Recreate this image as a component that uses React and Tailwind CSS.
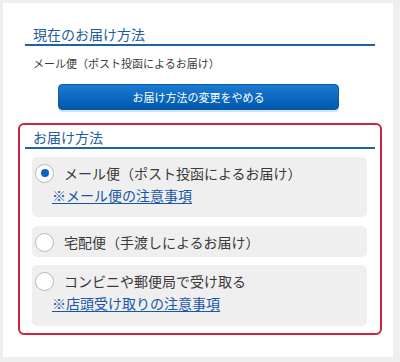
export default function App() {
  const font = { fontFamily: '"Noto Sans CJK JP", "Noto Sans", sans-serif' };
  return (
    <div
      className="w-[400px] h-[362px] bg-[#efefef] pt-[3px] pl-[3px] pr-[7px] pb-[5px]"
      style={font}
    >
      <div className="h-full bg-white pt-[21px] pl-[22px] pr-[18px] pb-[22px] flex flex-col">
        <div className="border-b-2 border-[#1d63a6] pl-[8px] text-[14px] leading-[20px] text-[#1f5d9c]">
          現在のお届け方法
        </div>
        <div className="mt-[8px] pl-[8px] text-[11px] leading-[18px] text-[#3a3a3a]">
          メール便（ポスト投函によるお届け）
        </div>
        <button className="mt-[12px] ml-[33px] w-[281px] h-[26px] rounded-[4px] bg-gradient-to-b from-[#1a7bd2] to-[#0058ad] border border-[#0b5aa6] text-white text-[11px] leading-[24px] shadow-[0_2px_0_#cfe7f8]">
          お届け方法の変更をやめる
        </button>
        <div className="mt-[13px] -mx-[7px] border-2 border-[#cc2340] rounded-[6px] pt-[2px] pb-[7px] px-[5px]">
          <div className="border-b-2 border-[#1d63a6] pl-[8px] text-[14px] leading-[20px] text-[#1f5d9c]">
            お届け方法
          </div>
          <div className="mt-[8px] pl-[7px] pr-[8px] flex flex-col gap-[9px]">
            <div className="bg-[#efefef] rounded-[5px] pt-[5px] pb-[11px] pl-[3px]">
              <div className="flex items-center h-[22px]">
                <span className="w-[19px] h-[19px] rounded-full border-[1.5px] border-[#b9b9b9] bg-white flex items-center justify-center">
                  <span className="w-[8px] h-[8px] rounded-full bg-[#0b63c2]" />
                </span>
                <span className="ml-[10px] text-[14px] leading-[22px] text-[#3a3a3a]">
                  メール便（ポスト投函によるお届け）
                </span>
              </div>
              <div className="pl-[17px] text-[14px] leading-[22px]">
                <a className="text-[#1a56a6] underline underline-offset-2">※メール便の注意事項</a>
              </div>
            </div>
            <div className="bg-[#efefef] rounded-[5px] pt-[5px] pb-[4px] pl-[3px]">
              <div className="flex items-center h-[22px]">
                <span className="w-[19px] h-[19px] rounded-full border-[1.5px] border-[#b9b9b9] bg-white" />
                <span className="ml-[10px] text-[14px] leading-[22px] text-[#3a3a3a]">
                  宅配便（手渡しによるお届け）
                </span>
              </div>
            </div>
            <div className="bg-[#efefef] rounded-[5px] pt-[5px] pb-[12px] pl-[3px] -mt-[1px]">
              <div className="flex items-center h-[22px]">
                <span className="w-[19px] h-[19px] rounded-full border-[1.5px] border-[#b9b9b9] bg-white" />
                <span className="ml-[10px] text-[14px] leading-[22px] text-[#3a3a3a]">
                  コンビニや郵便局で受け取る
                </span>
              </div>
              <div className="pl-[17px] text-[14px] leading-[22px]">
                <a className="text-[#1a56a6] underline underline-offset-2">※店頭受け取りの注意事項</a>
              </div>
            </div>
          </div>
        </div>
      </div>
    </div>
  );
}
